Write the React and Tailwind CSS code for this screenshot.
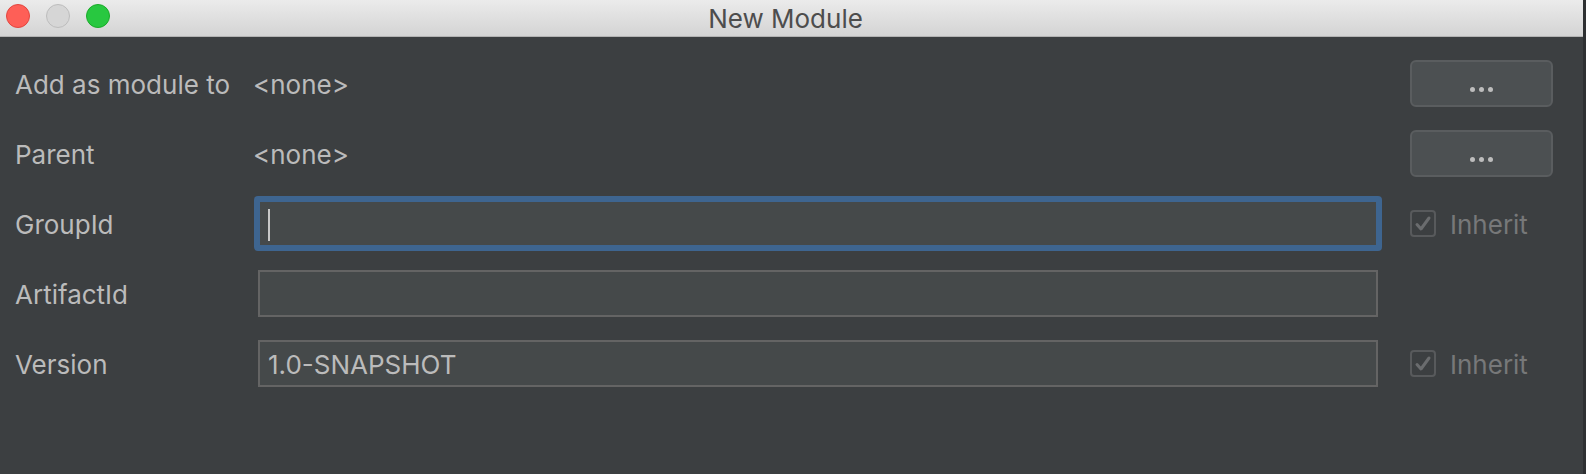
import React from 'react';

const font = { fontFamily: 'Inter, "Open Sans", sans-serif' };

const Check = () => (
  <div className="flex items-center gap-[14px]">
    <div className="w-[26px] h-[27px] rounded-[4px] border-2 border-[#585a5c] flex items-center justify-center">
      <svg width="18" height="18" viewBox="0 0 18 18">
        <path d="M3 9.5 L7 14 L15 3" fill="none" stroke="#6a6c6e" strokeWidth="3" strokeLinecap="round" strokeLinejoin="round" />
      </svg>
    </div>
    <span className="text-[26px] text-[#777879] pt-[2px]">Inherit</span>
  </div>
);

const DotsButton = () => (
  <button className="w-[143px] h-[47px] rounded-[6px] border-2 border-[#5a5d5f] bg-[#4c5052] flex items-end justify-center pb-[13px]">
    <span className="flex gap-[4px]">
      <span className="w-[5px] h-[5px] rounded-full bg-[#bdbdbd]" />
      <span className="w-[5px] h-[5px] rounded-full bg-[#bdbdbd]" />
      <span className="w-[5px] h-[5px] rounded-full bg-[#bdbdbd]" />
    </span>
  </button>
);

const Row = ({ label, children, right }) => (
  <div className="flex items-center h-[47px]">
    <div className="w-[253px] pl-[15px] pt-[2px] text-[26px] text-[#bbbbbb]">{label}</div>
    <div className="flex-1 flex items-center pr-[32px]">{children}</div>
    <div className="w-[143px] flex items-center">{right}</div>
  </div>
);

const Field = ({ value, focused }) => (
  <div className={focused ? 'ml-[1px] -mr-[4px] flex-1 rounded-[4px] p-[4px] bg-[#3e6590]' : 'ml-[5px] flex-1'}>
    <div className={'h-[47px] border-2 flex items-center pl-[8px] pt-[2px] text-[26px] text-[#bbbbbb] bg-[#45494a] ' + (focused ? 'border-[#3e6590]' : 'border-[#646464]')}>
      {focused ? <span className="w-[2px] h-[32px] bg-[#c8c8c8]" /> : value}
    </div>
  </div>
);

export default function App() {
  return (
    <div className="w-[1586px] h-[474px] bg-[#2e3032] flex" style={font}>
      <div className="w-[1583px] h-full flex flex-col bg-[#3c3f41]">
        <div className="relative h-[37px] shrink-0 border-b border-[#b3b3b3] bg-gradient-to-b from-[#ebebeb] to-[#d4d4d4] flex items-center justify-center">
          <div className="absolute left-[6px] top-[4px] flex gap-[16px]">
            <span className="w-[24px] h-[24px] rounded-full bg-[#fe5f57] border border-[#e2463f]" />
            <span className="w-[24px] h-[24px] rounded-full bg-[#d6d6d6] border border-[#bdbdbd]" />
            <span className="w-[24px] h-[24px] rounded-full bg-[#28c840] border border-[#1aab29]" />
          </div>
          <span className="text-[26px] text-[#4d4d4d] -ml-[12px]">New Module</span>
        </div>
        <div className="flex flex-col gap-[23px] pt-[23px] pr-[30px]">
          <Row label="Add as module to" right={<DotsButton />}>
            <span className="text-[26px] text-[#bbbbbb] pt-[2px]">&lt;none&gt;</span>
          </Row>
          <Row label="Parent" right={<DotsButton />}>
            <span className="text-[26px] text-[#bbbbbb] pt-[2px]">&lt;none&gt;</span>
          </Row>
          <Row label="GroupId" right={<Check />}>
            <Field focused />
          </Row>
          <Row label="ArtifactId">
            <Field value="" />
          </Row>
          <Row label="Version" right={<Check />}>
            <Field value="1.0-SNAPSHOT" />
          </Row>
        </div>
      </div>
    </div>
  );
}
